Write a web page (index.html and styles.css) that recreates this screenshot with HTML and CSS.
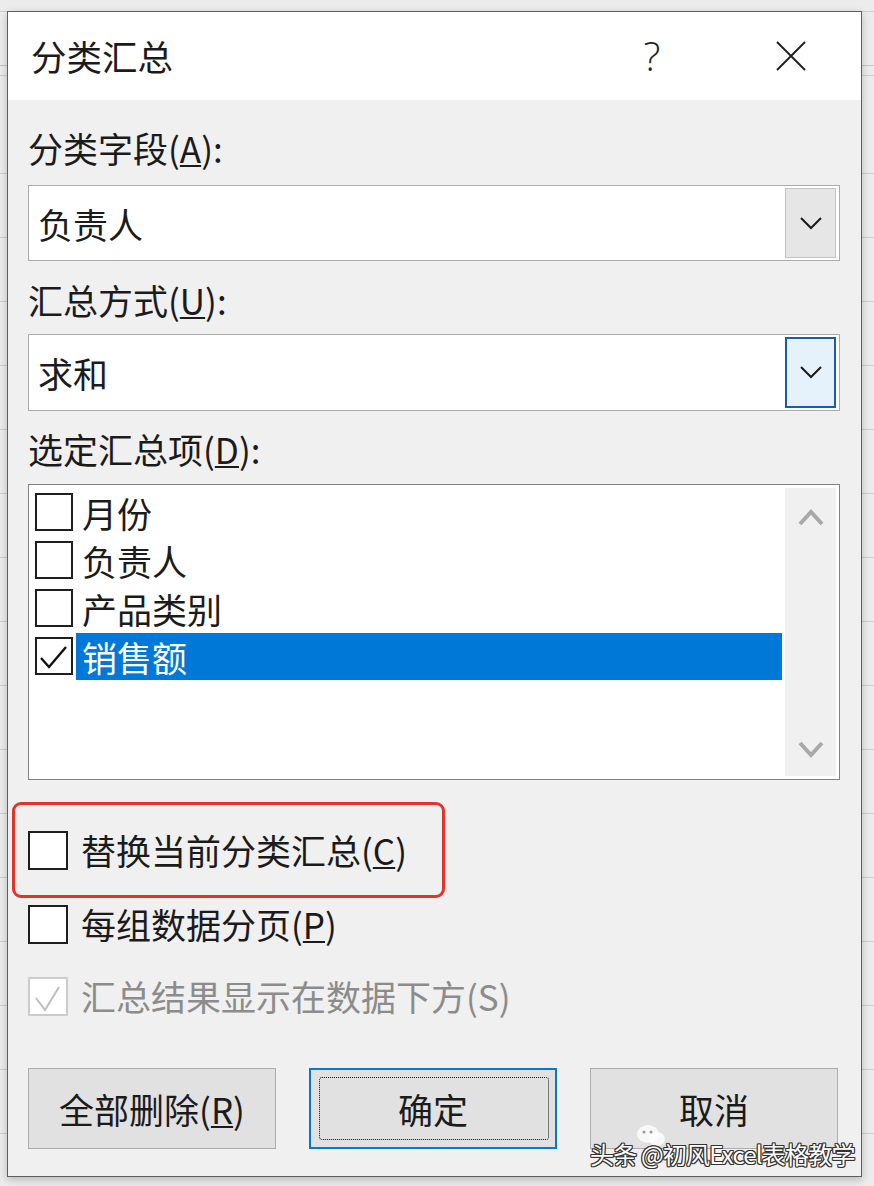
FILE: index.html
```html
<!DOCTYPE html>
<html lang="zh-CN">
<head>
<meta charset="utf-8">
<title>分类汇总</title>
<link rel="stylesheet" href="styles.css">
</head>
<body>
<div class="dialog">
  <div class="titlebar">
    <div class="title">分类汇总</div>
    <div class="help">?</div>
    <div class="close"><svg width="30" height="30" viewBox="0 0 30 30"><path d="M1 1 L29 29 M29 1 L1 29" stroke="#222" stroke-width="2" fill="none"/></svg></div>
  </div>
  <div class="content">
    <div class="label l1">分类字段(<u>A</u>):</div>
    <div class="combo c1">
      <span class="value">负责人</span>
      <span class="dd"><svg width="22" height="13" viewBox="0 0 22 13"><path d="M1 1 L11 11 L21 1" stroke="#1a1a1a" stroke-width="2" fill="none"/></svg></span>
    </div>
    <div class="label l2">汇总方式(<u>U</u>):</div>
    <div class="combo c2">
      <span class="value">求和</span>
      <span class="dd active"><svg width="22" height="13" viewBox="0 0 22 13"><path d="M1 1 L11 11 L21 1" stroke="#1a1a1a" stroke-width="2" fill="none"/></svg></span>
    </div>
    <div class="label l3">选定汇总项(<u>D</u>):</div>
    <div class="list">
      <div class="items">
        <div class="item"><span class="cb"></span><span class="txt">月份</span></div>
        <div class="item"><span class="cb"></span><span class="txt">负责人</span></div>
        <div class="item"><span class="cb"></span><span class="txt">产品类别</span></div>
        <div class="item sel"><span class="cb"><svg width="34" height="34" viewBox="0 0 34 34"><path d="M4 19 L12 28 L29 8" stroke="#111" stroke-width="2.4" fill="none"/></svg></span><span class="txt">销售额</span></div>
      </div>
      <div class="scroll">
        <svg width="26" height="18" viewBox="0 0 26 18"><path d="M2 16 L13 4 L24 16" stroke="#a9a9a9" stroke-width="4" fill="none"/></svg>
        <svg width="26" height="18" viewBox="0 0 26 18"><path d="M2 2 L13 14 L24 2" stroke="#a9a9a9" stroke-width="4" fill="none"/></svg>
      </div>
    </div>
    <div class="mark">
      <div class="opt"><span class="cb big"></span><span class="otxt">替换当前分类汇总(<u>C</u>)</span></div>
    </div>
    <div class="opt o2"><span class="cb big"></span><span class="otxt">每组数据分页(<u>P</u>)</span></div>
    <div class="opt o3 disabled"><span class="cb big"><svg width="35" height="35" viewBox="0 0 35 35"><path d="M5 19 L14 31 L28 8" stroke="#bdbdbd" stroke-width="2" fill="none"/></svg></span><span class="otxt">汇总结果显示在数据下方(S)</span></div>
    <div class="buttons">
      <div class="btn">全部删除(<u>R</u>)</div>
      <div class="btn primary">确定</div>
      <div class="btn">取消</div>
    </div>
  </div>
</div>
<svg class="wxicon" width="30" height="24" viewBox="0 0 30 24"><ellipse cx="12" cy="10" rx="11" ry="9" fill="#ffffff" opacity="0.75"/><ellipse cx="21" cy="15" rx="8" ry="7" fill="#ffffff" opacity="0.75"/><circle cx="8" cy="8" r="1.5" fill="#999"/><circle cx="15" cy="8" r="1.5" fill="#999"/></svg>
<div class="watermark">头条 @初风Excel表格教学</div>
</body>
</html>
```
FILE: styles.css
```css
html, body {
  margin: 0;
  padding: 0;
}

body {
  width: 874px;
  height: 1186px;
  overflow: hidden;
  box-sizing: border-box;
  padding: 11px 0 0 7px;
  background-color: #ececec;
  background-image:
    linear-gradient(to bottom, transparent 65px, #c4c4c4 65px, #c4c4c4 66px, transparent 66px),
    repeating-linear-gradient(to bottom, transparent 0 63px, #cdcdcd 63px 64px);
  background-position: 0 0, 0 110px;
  font-family: "Noto Sans CJK SC", "Microsoft YaHei", sans-serif;
  color: #1b1b1b;
  position: relative;
}

.dialog {
  width: 855px;
  height: 1166px;
  box-sizing: border-box;
  border: 1px solid #5e5e5e;
  background: #f0f0f0;
  box-shadow: 0 3px 8px rgba(0, 0, 0, 0.22);
  display: flex;
  flex-direction: column;
}

.titlebar {
  height: 88px;
  flex: none;
  background: #ffffff;
  display: flex;
  align-items: center;
  padding: 0 55px 0 23px;
}

.title {
  flex: 1;
  font-size: 35.5px;
  line-height: 40px;
}

.help {
  width: 40px;
  text-align: center;
  font-family: "Open Sans", "DejaVu Sans", sans-serif;
  font-weight: 300;
  font-size: 40px;
  line-height: 40px;
  color: #222;
  margin-right: 104px;
}

.close {
  width: 30px;
  height: 30px;
}

.close svg {
  display: block;
}

.content {
  flex: 1;
  display: flex;
  flex-direction: column;
  padding: 0 21px 0 20px;
  font-size: 35px;
}

u {
  text-decoration: underline;
  text-decoration-thickness: 2px;
  text-underline-offset: 2px;
}

.label {
  height: 40px;
  line-height: 40px;
  white-space: nowrap;
}

.l1 { margin-top: 28px; }
.l2 { margin-top: 19px; }
.l3 { margin-top: 18px; }

.combo {
  box-sizing: border-box;
  background: #ffffff;
  border: 1px solid #ababab;
  display: flex;
  align-items: stretch;
  padding: 2px 3px 2px 9px;
}

.c1 {
  margin-top: 17px;
  height: 76px;
}

.c2 {
  margin-top: 14px;
  height: 77px;
}

.combo .value {
  flex: 1;
  display: flex;
  align-items: center;
}

.dd {
  width: 51px;
  box-sizing: border-box;
  background: #e6e6e6;
  border: 1px solid #c2c2c2;
  display: flex;
  align-items: center;
  justify-content: center;
}

.dd.active {
  background: #e5f1fb;
  border: 2px solid #165fa8;
}

.list {
  margin-top: 15px;
  height: 296px;
  box-sizing: border-box;
  border: 1px solid #828282;
  background: #ffffff;
  padding: 3px;
  display: flex;
}

.items {
  flex: 1;
  display: flex;
  flex-direction: column;
}

.item {
  height: 48px;
  display: flex;
  align-items: center;
  padding-left: 3px;
}

.cb {
  width: 38px;
  height: 38px;
  box-sizing: border-box;
  border: 2px solid #1e1e1e;
  background: #ffffff;
  flex: none;
  display: flex;
  align-items: center;
  justify-content: center;
}

.cb svg {
  display: block;
}

.item .txt {
  margin-left: 3px;
  padding-left: 6px;
  flex: 1;
  height: 47px;
  line-height: 47px;
}

.item.sel .txt {
  background: #0078d7;
  color: #ffffff;
}

.scroll {
  width: 51px;
  margin-left: 3px;
  background: #f0f0f0;
  display: flex;
  flex-direction: column;
  align-items: center;
  justify-content: space-between;
  padding: 20px 0 17px;
  box-sizing: border-box;
}

.mark {
  margin-top: 22px;
  margin-left: -16px;
  width: 433px;
  height: 96px;
  box-sizing: border-box;
  border: 3px solid #e2332d;
  border-radius: 9px;
  padding-left: 13px;
  display: flex;
  align-items: center;
}

.opt {
  height: 48px;
  display: flex;
  align-items: center;
  white-space: nowrap;
}

.cb.big {
  width: 40px;
  height: 39px;
  margin-right: 13px;
}

.otxt {
  line-height: 48px;
}

.o2 { margin-top: 2px; }
.o3 { margin-top: 24px; }

.disabled {
  color: #8c8c8c;
}

.disabled .cb {
  border-color: #cccccc;
}

.buttons {
  margin-top: 48px;
  display: flex;
  gap: 33px;
}

.btn {
  width: 248px;
  height: 81px;
  box-sizing: border-box;
  background: #e1e1e1;
  border: 1px solid #adadad;
  display: flex;
  align-items: center;
  justify-content: center;
  position: relative;
}

.btn.primary {
  border: 2px solid #0078d7;
}

.btn.primary::after {
  content: "";
  position: absolute;
  top: 7px;
  bottom: 7px;
  left: 8px;
  right: 6px;
  border: 1.5px dotted #111;
  border-radius: 3px;
}

.wxicon {
  position: absolute;
  left: 636px;
  top: 1124px;
}

.watermark {
  position: absolute;
  left: 590px;
  top: 1136px;
  font-size: 24px;
  letter-spacing: -0.8px;
  color: #ffffff;
  white-space: nowrap;
  text-shadow:
    1px 1px 0 #333, -1px -1px 0 #333, 1px -1px 0 #333, -1px 1px 0 #333,
    0 1px 0 #333, 0 -1px 0 #333, 1px 0 0 #333, -1px 0 0 #333;
}
```
